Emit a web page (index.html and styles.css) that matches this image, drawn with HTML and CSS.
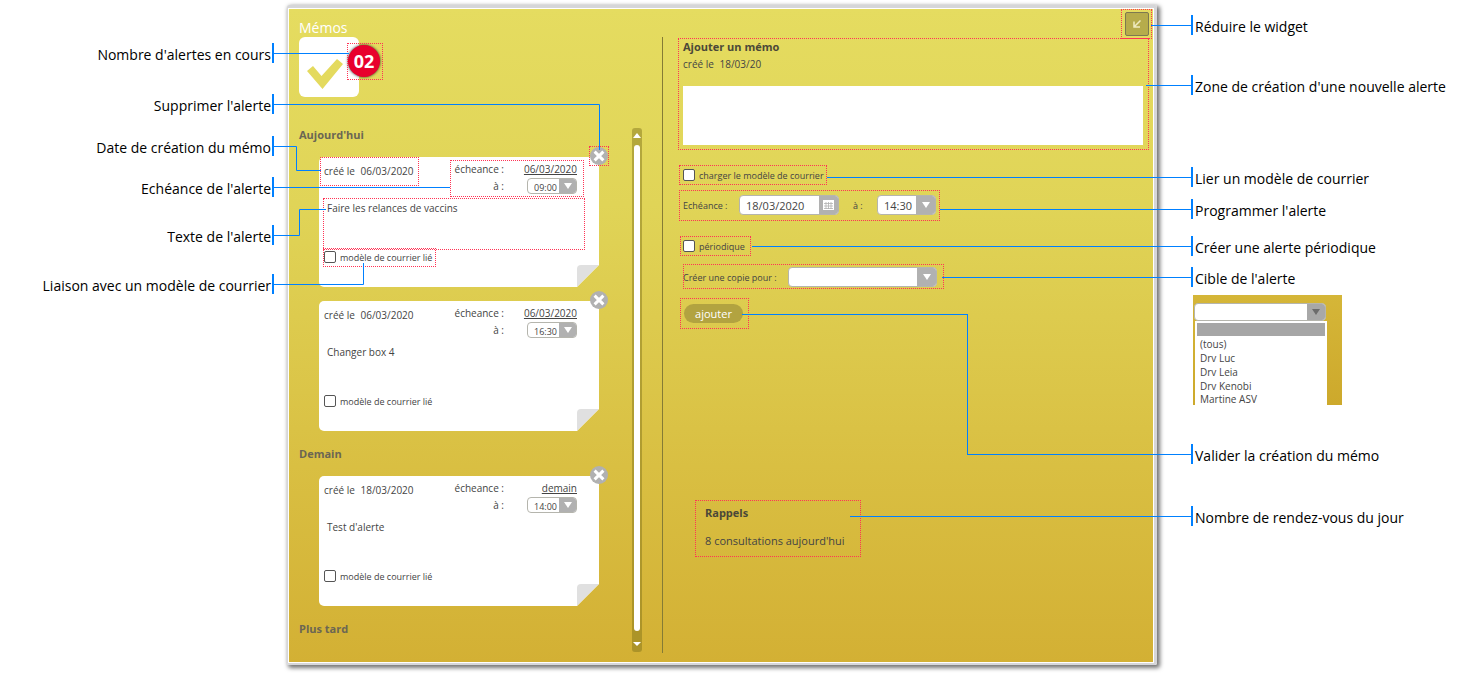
FILE: index.html
```
<!DOCTYPE html>
<html lang="fr">
<head>
<meta charset="utf-8">
<title>Mémos</title>
<link rel="stylesheet" href="styles.css">
</head>
<body>
<svg class="defs" aria-hidden="true">
  <symbol id="arrow" viewBox="0 0 8 6"><path d="M0 0H8L4 6Z" fill="currentColor"/></symbol>
  <symbol id="close" viewBox="0 0 18 18"><circle cx="9" cy="9" r="9" fill="#b1b1b1"/><path d="M4.6 4.6L13.4 13.4M13.4 4.6L4.6 13.4" stroke="#fff" stroke-width="3"/></symbol>
  <symbol id="fold" viewBox="0 0 22 22"><path d="M0 22V4Q0 0 4 0H22Z" fill="#e0e0e0"/></symbol>
</svg>
<main class="figure">
  <aside class="labels labels-left">
    <p class="label at-badge">Nombre d'alertes en cours</p>
    <p class="label at-delete">Supprimer l'alerte</p>
    <p class="label at-created">Date de création du mémo</p>
    <p class="label at-due">Echéance de l'alerte</p>
    <p class="label at-text">Texte de l'alerte</p>
    <p class="label at-link">Liaison avec un modèle de courrier</p>
  </aside>

  <section class="widget">
    <div class="memos">
      <h1 class="title">Mémos</h1>
      <div class="logo">
        <svg class="logo-check" viewBox="0 0 36 30"><path d="M0 12L6 7L14.500 17L30 0L36 5L15.500 30Z" fill="#e4da5e"/></svg>
        <span class="badge">02</span>
      </div>
      <div class="scroller">
        <div class="list">
          <h2 class="day">Aujourd'hui</h2>
          <article class="card">
            <button class="close" aria-label="Supprimer"><svg><use href="#close"/></svg></button>
            <div class="card-head">
              <p class="created">créé le <span class="date">06/03/2020</span></p>
              <div class="due"><span>écheance :</span><a href="#" class="due-date">06/03/2020</a>
                <label for="h1">à :</label><span class="pick small"><select id="h1"><option>09:00</option></select><i><svg><use href="#arrow"/></svg></i></span></div>
            </div>
            <p class="text">Faire les relances de vaccins</p>
            <label class="check"><input type="checkbox">modèle de courrier lié</label>
            <svg class="fold"><use href="#fold"/></svg>
          </article>
          <article class="card">
            <button class="close" aria-label="Supprimer"><svg><use href="#close"/></svg></button>
            <div class="card-head">
              <p class="created">créé le <span class="date">06/03/2020</span></p>
              <div class="due"><span>écheance :</span><a href="#" class="due-date">06/03/2020</a>
                <label for="h2">à :</label><span class="pick small"><select id="h2"><option>16:30</option></select><i><svg><use href="#arrow"/></svg></i></span></div>
            </div>
            <p class="text">Changer box 4</p>
            <label class="check"><input type="checkbox">modèle de courrier lié</label>
            <svg class="fold"><use href="#fold"/></svg>
          </article>
          <h2 class="day">Demain</h2>
          <article class="card">
            <button class="close" aria-label="Supprimer"><svg><use href="#close"/></svg></button>
            <div class="card-head">
              <p class="created">créé le <span class="date">18/03/2020</span></p>
              <div class="due"><span>écheance :</span><a href="#" class="due-date">demain</a>
                <label for="h3">à :</label><span class="pick small"><select id="h3"><option>14:00</option></select><i><svg><use href="#arrow"/></svg></i></span></div>
            </div>
            <p class="text">Test d'alerte</p>
            <label class="check"><input type="checkbox">modèle de courrier lié</label>
            <svg class="fold"><use href="#fold"/></svg>
          </article>
          <h2 class="day">Plus tard</h2>
        </div>
        <div class="scrollbar">
          <svg viewBox="0 0 8 5"><path d="M0 5L4 0L8 5Z" fill="#fff"/></svg>
          <span class="thumb"></span>
          <svg viewBox="0 0 8 5"><path d="M0 0H8L4 4Z" fill="#fff"/></svg>
        </div>
      </div>
    </div>

    <form class="create">
      <div class="toolbar">
        <button type="button" class="reduce" aria-label="Réduire"><svg viewBox="0 0 8 8"><path d="M7.500 .5L1.500 6.500M1 1.500V7H7" fill="none" stroke="#efebc0" stroke-width="1.500"/></svg></button>
      </div>
      <h2 class="form-title"><label for="memo">Ajouter un mémo</label></h2>
      <p class="form-date">créé le <span class="date">18/03/20</span></p>
      <textarea id="memo" class="memo"></textarea>
      <label class="check row-model"><input type="checkbox">charger le modèle de courrier</label>
      <div class="row row-due">
        <label for="due">Echéance :</label>
        <span class="pick calendar"><input id="due" type="text" value="18/03/2020"><i><svg viewBox="0 0 11 10"><path d="M0 0H11V10H0Z" fill="#fff"/><path d="M1 3.500H10M1 6H10M1 8.500H10M3 2V9M5.500 2V9M8 2V9" stroke="#b1b1b1" stroke-width=".8"/></svg></i></span>
        <label for="hour" class="at">à :</label>
        <span class="pick hour"><select id="hour"><option>14:30</option></select><i><svg><use href="#arrow"/></svg></i></span>
      </div>
      <label class="check row-periodic"><input type="checkbox">périodique</label>
      <div class="row row-copy">
        <label for="copy">Créer une copie pour :</label>
        <span class="pick copy"><select id="copy"><option></option></select><i><svg><use href="#arrow"/></svg></i></span>
      </div>
      <button type="button" class="add">ajouter</button>
      <div class="reminders">
        <h2 class="form-title">Rappels</h2>
        <p>8 consultations aujourd'hui</p>
      </div>
    </form>
  </section>

  <aside class="labels labels-right">
    <p class="label at-reduce">Réduire le widget</p>
    <p class="label at-zone">Zone de création d'une nouvelle alerte</p>
    <p class="label at-model">Lier un modèle de courrier</p>
    <p class="label at-schedule">Programmer l'alerte</p>
    <p class="label at-periodic">Créer une alerte périodique</p>
    <p class="label at-target">Cible de l'alerte</p>
    <div class="sample">
      <span class="pick"><select aria-label="Cible"><option></option></select><i><svg><use href="#arrow"/></svg></i></span>
      <ul class="options">
        <li class="current"></li>
        <li>(tous)</li>
        <li>Drv Luc</li>
        <li>Drv Leia</li>
        <li>Drv Kenobi</li>
        <li class="last">Martine ASV</li>
      </ul>
    </div>
    <p class="label at-validate">Valider la création du mémo</p>
    <p class="label at-count">Nombre de rendez-vous du jour</p>
  </aside>

  <div class="notes" aria-hidden="true">
    <b class="frame f-badge"></b>
    <b class="frame f-delete"></b>
    <b class="frame f-created"></b>
    <b class="frame f-due"></b>
    <b class="frame f-text"></b>
    <b class="frame f-link"></b>
    <b class="frame f-reduce"></b>
    <b class="frame f-zone"></b>
    <b class="frame f-model"></b>
    <b class="frame f-schedule"></b>
    <b class="frame f-periodic"></b>
    <b class="frame f-target"></b>
    <b class="frame f-add"></b>
    <b class="frame f-count"></b>
    <svg class="leaders" viewBox="0 0 620 300"><path d="M274 53.500H349M274 104.500H599.500V150M274 146.500H296.500V170.500H321M274 187.500H450M274 235.500H299.500V209.500H326M274 284.500H363.500V263"/></svg>
    <b class="line l-reduce"></b>
    <b class="line l-zone"></b>
    <b class="line l-model"></b>
    <b class="line l-schedule"></b>
    <b class="line l-periodic"></b>
    <b class="line l-target"></b>
    <b class="line l-add"></b>
    <b class="line l-validate"></b>
    <b class="line l-count"></b>
  </div>
</main>
</body>
</html>
```
FILE: styles.css
```
* { box-sizing: border-box; }
body {
  margin: 0;
  background: #fff;
  color: #444;
  font-family: "Open Sans", "Noto Sans", sans-serif;
  font-size: 10px;
}
h1, h2, p, ul { margin: 0; padding: 0; }
svg { display: block; }
button, input, select, textarea { font: inherit; color: inherit; margin: 0; padding: 0; border: 0; }
.defs { position: absolute; width: 0; height: 0; }

.figure {
  position: relative;
  display: grid;
  grid-template-columns: 274px minmax(820px, 1fr) 278px;
  align-items: start;
  min-width: 1372px;
  padding-bottom: 9px;
}

/* Side captions */
.label {
  height: 20px;
  padding-top: 3px;
  line-height: 18px;
  font-size: 14px;
  color: #000;
  white-space: nowrap;
}
.labels-left .label { padding-right: 1px; border-right: 2px solid #0080ff; text-align: right; }
.labels-right .label { padding-left: 2px; border-left: 2px solid #0080ff; }
.at-badge { margin-top: 43px; }
.at-delete { margin-top: 31px; }
.at-created { margin-top: 22px; }
.at-due { margin-top: 21px; }
.at-text { margin-top: 28px; }
.at-link { margin-top: 29px; }
.at-reduce { margin-top: 15px; }
.at-zone { margin-top: 40px; }
.at-model { margin-top: 72px; }
.at-schedule { margin-top: 12px; }
.at-periodic { margin-top: 17px; }
.at-target { margin-top: 11px; }
.at-validate { margin-top: 39px; }
.at-count { margin-top: 42px; }

/* Widget */
.widget {
  display: grid;
  grid-template-columns: 374px 1fr;
  margin: 5px 34px 0 13px;
  border: solid #d6d6d8;
  border-width: 3px 3px 2px 1px;
  border-radius: 2px;
  background: linear-gradient(#e5dc60, #e0d457 30%, #d9bf42 70%, #d3b034) padding-box;
  box-shadow: inset 0 0 0 1px #fff, 2px 2px 4px 1px rgba(0, 0, 0, .55);
}
.memos { padding: 11px 0 11px 11px; }
.title { font-size: 14px; line-height: 18px; font-weight: 400; color: #fff; }
.logo { position: relative; width: 60px; height: 60px; padding: 22px 15px 8px 8px; border-radius: 6px; background: #fff; }
.logo-check { width: 36px; height: 30px; }
.badge {
  position: absolute;
  left: 49px;
  top: 8px;
  width: 32px;
  height: 32px;
  border-radius: 50%;
  background: #e8002d;
  box-shadow: 0 0 3px #222;
  color: #fff;
  font: bold 18px/32px "Open Sans", sans-serif;
  text-align: center;
}
.scroller { display: flex; justify-content: space-between; margin-top: 31px; padding-right: 20px; }
.list { padding-bottom: 16px; }
.day { font-size: 11px; line-height: 14px; color: #6b6653; }
.day + .card { margin-top: 15px; }
.card + .card { margin-top: 14px; }
.card + .day { margin-top: 16px; }
.card {
  position: relative;
  width: 280px;
  height: 130px;
  margin-left: 20px;
  padding: 4px 22px 0 5px;
  border-radius: 5px 0 0 5px;
  background: #fff;
  clip-path: polygon(0 0, 261px 0, 261px -10px, 290px -10px, 290px 30px, 280px 30px, 280px 108px, 258px 130px, 0 130px);
}
.card-head { display: flex; justify-content: space-between; height: 35px; }
.created { padding-top: 2px; line-height: 16px; }
.date { margin-left: 3px; }
.due { display: grid; grid-template-columns: 52px 50px; column-gap: 23px; grid-auto-rows: 17px; line-height: 17px; }
.due > :nth-child(odd) { text-align: right; white-space: nowrap; }
.due-date { color: inherit; text-align: right; white-space: nowrap; justify-self: end; }
.text { height: 54px; padding: 4px 3px; line-height: 16px; }
.check { display: flex; align-items: center; gap: 4px; height: 14px; font-size: 9px; }
.check input {
  appearance: none;
  width: 12px;
  height: 12px;
  border: 1px solid #555;
  border-radius: 2px;
  background: #fff;
}
.close { position: absolute; right: -9px; top: -10px; width: 18px; height: 18px; background: none; }
.close svg { width: 18px; height: 18px; }
.fold { position: absolute; right: 0; bottom: 0; width: 22px; height: 22px; }

/* Select and date fields */
.pick {
  display: flex;
  height: 20px;
  border: 1px solid #b5b5ad;
  border-radius: 4px;
  background: #fff;
  overflow: hidden;
}
.pick select, .pick input { appearance: none; flex: 1; min-width: 0; padding-left: 6px; background: none; outline: 0; }
.pick i { display: grid; place-items: center; width: 19px; background: #b1b1b1; color: #fff; }
.pick i svg { width: 8px; height: 6px; }
.small { height: 16px; font-size: 9px; }
.small i { width: 17px; }

.scrollbar {
  display: flex;
  flex-direction: column;
  align-items: center;
  width: 10px;
  padding: 5px 0;
  border-radius: 3px;
  background: rgba(125, 110, 25, .45);
}
.scrollbar svg { width: 8px; height: 5px; }
.thumb { flex: 1; width: 6px; margin: 7px 0 11px; border-radius: 3px; background: #fff; }

/* Creation form */
.create { position: relative; padding: 4px 11px 0 21px; }
.create::before { content: ""; position: absolute; left: 0; top: 29px; bottom: 10px; width: 1px; background: #857b35; }
.toolbar { display: flex; justify-content: flex-end; margin-right: -6px; }
.reduce { display: grid; place-items: center; width: 24px; height: 24px; border: 1px solid #7d7950; border-radius: 2px; background: #b6ac4b; }
.reduce svg { width: 8px; height: 8px; }
.form-title { font-size: 11px; line-height: 18px; color: #4b4838; }
.toolbar + .form-title { margin-top: 2px; }
.form-date { line-height: 16px; }
.memo { display: block; width: 100%; height: 59px; margin-top: 14px; background: #fff; resize: none; outline: 0; }
.row { display: flex; align-items: center; height: 20px; font-size: 9px; }
.row-model { margin-top: 23px; }
.row-due { margin-top: 13px; }
.row-due > :first-child { width: 56px; }
.calendar { width: 100px; font-size: 11px; }
.calendar i svg { width: 11px; height: 10px; }
.at { width: 38px; padding-left: 14px; }
.hour { width: 59px; font-size: 11px; }
.row-periodic { margin-top: 24px; }
.row-copy { margin-top: 14px; }
.row-copy > :first-child { width: 105px; white-space: nowrap; }
.copy { width: 149px; }
.add { width: 59px; height: 19px; margin: 17px 0 0 1px; border-radius: 10px; background: #b2a340; color: #fff; font-size: 11px; line-height: 17px; }
.reminders { margin: 181px 0 0 22px; }
.reminders p { margin-top: 10px; line-height: 18px; font-size: 11px; white-space: nowrap; }

/* Opened list */
.sample { width: 149px; height: 110px; margin: 8px 0 0 2px; padding: 8px 15px 0 1px; background: linear-gradient(#d5b638, #cda92c); }
.sample .pick { height: 18px; width: 132px; }
.sample .pick i { width: 18px; background: #a8a8a8; color: #6c6c6c; }
.options { width: 132px; margin-left: 1px; padding: 2px 2px 0; list-style: none; background: #fff; font-size: 10px; line-height: 14px; }
.options li { padding-left: 3px; }
.options .current { height: 13px; width: 128px; margin-bottom: 1px; background: #a6a6a6; }
.options .last { line-height: 12px; }

/* Callouts drawn over the widget */
.notes { position: absolute; inset: 0; pointer-events: none; }
.frame { position: absolute; border: 1px dotted #ff3355; }
.f-badge { left: 347px; top: 43px; width: 36px; height: 37px; }
.f-delete { left: 589px; top: 146px; width: 20px; height: 20px; }
.f-created { left: 320px; top: 157px; width: 99px; height: 29px; }
.f-due { left: 450px; top: 160px; width: 134px; height: 37px; }
.f-text { left: 323px; top: 198px; width: 262px; height: 52px; }
.f-link { left: 323px; top: 248px; width: 113px; height: 19px; }
.f-reduce { right: 317px; top: 9px; width: 31px; height: 30px; }
.f-zone { left: 678px; right: 320px; top: 38px; height: 112px; }
.f-model { left: 679px; top: 165px; width: 148px; height: 20px; }
.f-schedule { left: 679px; top: 190px; width: 261px; height: 31px; }
.f-periodic { left: 680px; top: 236px; width: 71px; height: 20px; }
.f-target { left: 683px; top: 264px; width: 261px; height: 25px; }
.f-add { left: 680px; top: 298px; width: 69px; height: 31px; }
.f-count { left: 695px; top: 500px; width: 166px; height: 57px; }
.leaders { position: absolute; left: 0; top: 0; width: 620px; height: 300px; }
.leaders path { fill: none; stroke: #0080ff; stroke-width: 1; }
.line { position: absolute; right: 278px; height: 1px; background: #0080ff; }
.l-reduce { width: 40px; top: 25px; }
.l-zone { width: 45px; top: 85px; }
.l-model { left: 827px; top: 177px; }
.l-schedule { left: 940px; top: 209px; }
.l-periodic { left: 752px; top: 246px; }
.l-target { left: 942px; top: 277px; }
.l-add { left: 742px; right: auto; width: 226px; height: 141px; top: 314px; background: none; border: solid #0080ff; border-width: 1px 1px 0 0; }
.l-validate { left: 967px; top: 454px; }
.l-count { left: 850px; top: 516px; }
```
